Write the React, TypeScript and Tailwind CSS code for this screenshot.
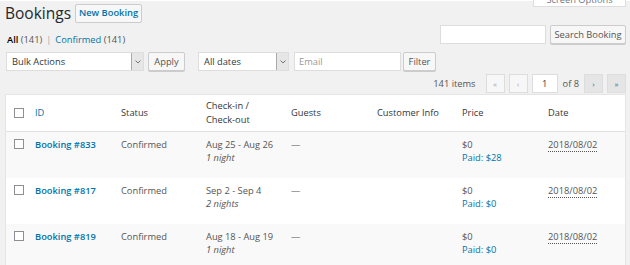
import React from 'react';

type Row = { id: string; dates: string; nights: string; paid: string; striped: boolean };

const rows: Row[] = [
  { id: '833', dates: 'Aug 25 - Aug 26', nights: '1 night', paid: '$28', striped: true },
  { id: '817', dates: 'Sep 2 - Sep 4', nights: '2 nights', paid: '$0', striped: false },
  { id: '819', dates: 'Aug 18 - Aug 19', nights: '1 night', paid: '$0', striped: true },
];

const cols = 'grid grid-cols-[29px_86px_85px_85px_86px_85px_86px_1fr]';

function Checkbox() {
  return <span className="block h-[10px] w-[10px] border border-[#8c8f94] bg-white" />;
}

function SelectBox({ label, width }: { label: string; width: string }) {
  return (
    <div className={`flex h-[19px] items-stretch border border-[#ddd] bg-white ${width}`}>
      <span className="flex-1 pl-[5px] leading-[17px] text-[#32373c]">{label}</span>
      <span className="flex w-[12px] items-center justify-center border-l border-[#aaa] bg-[#e6e6e6]">
        <svg width="6" height="4" viewBox="0 0 6 4">
          <path d="M0.5 0.5 L3 3 L5.5 0.5" fill="none" stroke="#666" strokeWidth="0.9" />
        </svg>
      </span>
    </div>
  );
}

function Button({ children, className = '' }: { children: React.ReactNode; className?: string }) {
  return (
    <span
      className={`flex h-[19px] items-center justify-center whitespace-nowrap rounded-[2px] border border-[#ccc] bg-[#f7f7f7] text-[#555] shadow-[0_1px_0_#ccc] ${className}`}
    >
      {children}
    </span>
  );
}

function PageBtn({ children, active = false }: { children: React.ReactNode; active?: boolean }) {
  return (
    <span
      className={`flex h-[19px] w-[19px] items-center justify-center border border-[#ddd] text-[8px] ${
        active ? 'bg-[#e5e5e5] text-[#0073aa]' : 'bg-[#f7f7f7] text-[#a0a5aa]'
      }`}
    >
      {children}
    </span>
  );
}

export default function App() {
  return (
    <div
      className="relative h-[265px] w-[630px] overflow-hidden bg-[#f1f1f1] text-[9.3px] text-[#555]"
      style={{ fontFamily: '"Open Sans", "Noto Sans", sans-serif' }}
    >
      <div className="h-[1px] bg-white" />
      <div className="absolute right-[4px] top-[-7px] flex h-[14px] w-[93px] items-end justify-center border border-[#ddd] bg-white text-[9.3px] leading-[12px] text-[#72777c]">
        Screen Options
      </div>

      <div className="flex items-center pl-[5px] pt-[1px]">
        <h1 className="text-[15.5px] leading-[22px] text-[#23282d]">Bookings</h1>
        <span className="ml-[4px] flex h-[19px] w-[67px] items-center justify-center rounded-[2px] border border-[#ccc] bg-[#f7f7f7] text-[9.3px] font-semibold text-[#0073aa]">
          New Booking
        </span>
      </div>

      <div className="mt-[1px] flex items-start justify-between pl-[7px] pr-[4px]">
        <div className="pt-[9px] leading-[12px]">
          <span className="font-semibold text-black">All</span> <span className="text-[#555]">(141)</span>
          <span className="mx-[4px] text-[#a0a5aa]">|</span>
          <span className="text-[#0073aa]">Confirmed</span> <span>(141)</span>
        </div>
        <div className="flex gap-[4px]">
          <span className="h-[19px] w-[106px] border border-[#ddd] bg-white" />
          <Button className="w-[76px]">Search Booking</Button>
        </div>
      </div>

      <div className="mt-[6px] flex items-center pl-[6px]">
        <SelectBox label="Bulk Actions" width="w-[138px]" />
        <Button className="ml-[4px] w-[37px]">Apply</Button>
        <span className="ml-[13px]">
          <SelectBox label="All dates" width="w-[91px]" />
        </span>
        <span className="ml-[5px] flex h-[19px] w-[107px] items-center border border-[#ddd] bg-white pl-[4px] text-[#999]">
          Email
        </span>
        <Button className="ml-[2px] w-[33px]">Filter</Button>
      </div>

      <div className="mt-[3px] flex items-center justify-end gap-[4px] pr-[4px]">
        <span className="mr-[6px]">141 items</span>
        <PageBtn>«</PageBtn>
        <PageBtn>‹</PageBtn>
        <span className="flex h-[19px] w-[26px] items-center justify-center border border-[#ddd] bg-white text-[#32373c]">
          1
        </span>
        <span className="mx-[1px]">of 8</span>
        <PageBtn active>›</PageBtn>
        <PageBtn active>»</PageBtn>
      </div>

      <div className="ml-[5px] mr-[4px] mt-[1px] border border-[#e5e5e5] bg-white">
        <div className={`${cols} h-[37px] items-center border-b border-[#e1e1e1] text-[#32373c]`}>
          <span className="pl-[8px]">
            <Checkbox />
          </span>
          <span className="text-[#0073aa]">ID</span>
          <span>Status</span>
          <span className="leading-[14px]">
            Check-in /<br />
            Check-out
          </span>
          <span>Guests</span>
          <span>Customer Info</span>
          <span>Price</span>
          <span>Date</span>
        </div>
        {rows.map((r) => (
          <div
            key={r.id}
            className={`${cols} h-[46px] pt-[6px] leading-[13px] ${r.striped ? 'bg-[#f9f9f9]' : 'bg-white'}`}
          >
            <span className="pl-[8px] pt-[1px]">
              <Checkbox />
            </span>
            <span className="font-semibold text-[#0073aa]">Booking #{r.id}</span>
            <span>Confirmed</span>
            <span>
              <div>{r.dates}</div>
              <div className="italic">{r.nights}</div>
            </span>
            <span>—</span>
            <span />
            <span>
              <div>$0</div>
              <div className="text-[#0073aa]">Paid: {r.paid}</div>
            </span>
            <span>
              <span className="border-b border-dotted border-[#555]">2018/08/02</span>
            </span>
          </div>
        ))}
      </div>
    </div>
  );
}
